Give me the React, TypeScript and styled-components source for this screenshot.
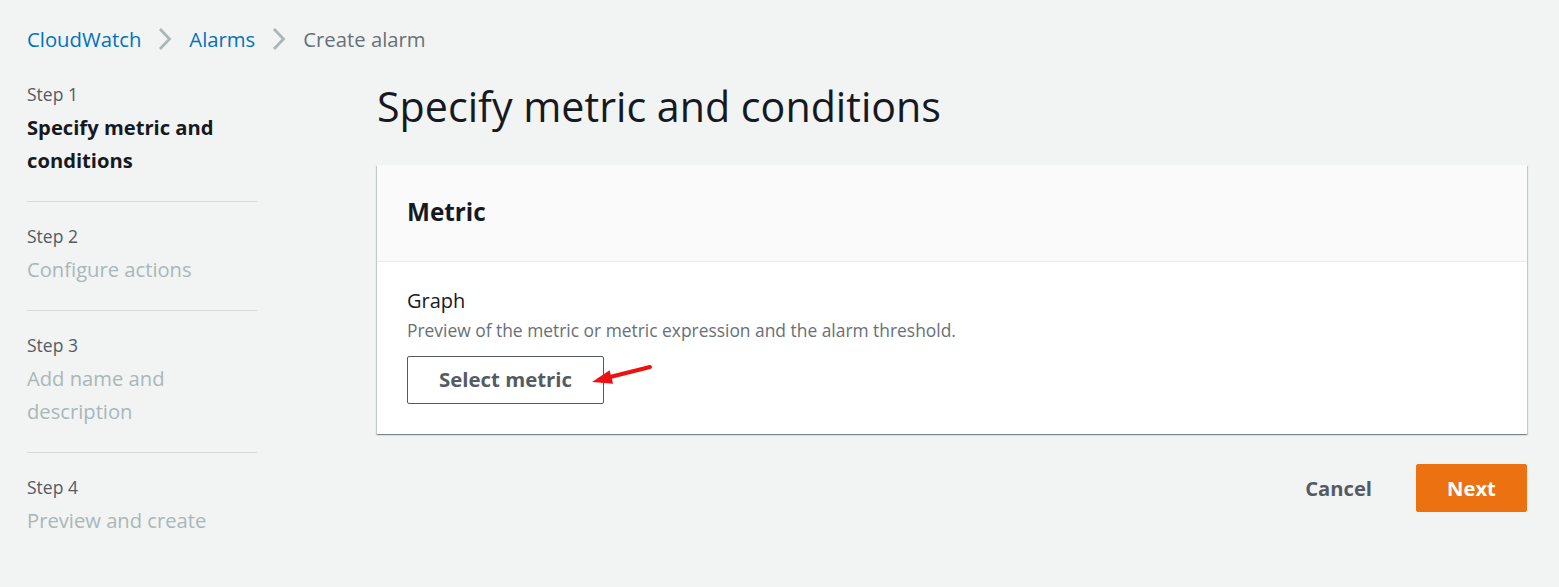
import React from "react";
import styled, { createGlobalStyle } from "styled-components";

const Global = createGlobalStyle`
  html, body { margin: 0; padding: 0; background: #f2f3f3; }
  body { font-family: "Open Sans", "Noto Sans", sans-serif; color: #16191f; }
  * { box-sizing: border-box; }
`;

const Page = styled.div`
  padding: 24px 32px 20px 27px;
`;

const Breadcrumbs = styled.nav`
  display: flex;
  align-items: center;
  gap: 17px;
  height: 30px;
  font-size: 20.3px;
`;

const Crumb = styled.a<{ $current?: boolean }>`
  color: ${(p) => (p.$current ? "#687078" : "#0073bb")};
  text-decoration: none;
`;

const Chevron = styled.svg`
  width: 14px;
  height: 24px;
  flex: none;
`;

const Layout = styled.div`
  display: flex;
  gap: 120px;
  margin-top: 27px;
`;

const Sidebar = styled.ol`
  list-style: none;
  margin: 0;
  padding: 0;
  width: 230px;
  flex: none;
`;

const StepItem = styled.li<{ $last?: boolean }>`
  padding: 0 0 24px;
  margin-bottom: 21px;
  border-bottom: ${(p) => (p.$last ? "none" : "1px solid #d5dbdb")};
`;

const StepLabel = styled.div`
  font-size: 17.5px;
  line-height: 26px;
  color: #545b64;
`;

const StepTitle = styled.div<{ $active?: boolean }>`
  font-size: 20.2px;
  line-height: 33px;
  margin-top: 4px;
  font-weight: ${(p) => (p.$active ? 700 : 400)};
  color: ${(p) => (p.$active ? "#16191f" : "#aab7b8")};
`;

const Main = styled.main`
  flex: 1;
  min-width: 0;
`;

const Title = styled.h1`
  margin: 0;
  margin-top: -3px;
  font-size: 41.2px;
  font-weight: 400;
  line-height: 56px;
`;

const Card = styled.section`
  margin-top: 31px;
  background: #fff;
  box-shadow: 0 1px 1px 0 rgba(0, 28, 36, 0.3), 1px 1px 1px 0 rgba(0, 28, 36, 0.15),
    -1px 1px 1px 0 rgba(0, 28, 36, 0.15);
`;

const CardHeader = styled.header`
  height: 97px;
  display: flex;
  align-items: center;
  padding: 0 30px 3px;
  background: #fafafa;
  border-bottom: 1px solid #eaeded;
`;

const CardTitle = styled.h2`
  margin: 0;
  font-size: 24.3px;
  font-weight: 700;
`;

const CardBody = styled.div`
  padding: 24px 30px 30px;
`;

const FieldLabel = styled.div`
  font-size: 20px;
  line-height: 30px;
  color: #16191f;
`;

const FieldDesc = styled.div`
  font-size: 17.4px;
  line-height: 28px;
  color: #687078;
`;

const ButtonRow = styled.div`
  position: relative;
  display: inline-flex;
  margin-top: 12px;
`;

const OutlineButton = styled.button`
  width: 197px;
  height: 48px;
  padding: 0 0 2px;
  border: 1px solid #545b64;
  border-radius: 2px;
  background: #fff;
  font-family: inherit;
  font-size: 20.4px;
  font-weight: 700;
  color: #545b64;
  cursor: pointer;
`;

const Arrow = styled.svg`
  position: absolute;
  left: 180px;
  top: 5px;
  width: 70px;
  height: 28px;
  pointer-events: none;
`;

const Actions = styled.div`
  display: flex;
  justify-content: flex-end;
  align-items: center;
  gap: 44px;
  margin-top: 30px;
`;

const TextButton = styled.button`
  background: none;
  border: none;
  font-family: inherit;
  font-size: 20.2px;
  font-weight: 700;
  color: #545b64;
  padding: 0;
  cursor: pointer;
`;

const PrimaryButton = styled.button`
  width: 111px;
  height: 48px;
  background: #ec7211;
  border: 1px solid #ec7211;
  border-radius: 2px;
  color: #fff;
  font-family: inherit;
  font-size: 20.2px;
  font-weight: 700;
  cursor: pointer;
`;

const ChevronIcon = () => (
  <Chevron viewBox="0 0 14 24">
    <path d="M2 2 L11.5 12 L2 22" fill="none" stroke="#aab7b8" strokeWidth="2.8" />
  </Chevron>
);

const steps = [
  { label: "Step 1", title: "Specify metric and conditions", active: true },
  { label: "Step 2", title: "Configure actions" },
  { label: "Step 3", title: "Add name and description" },
  { label: "Step 4", title: "Preview and create" },
];

export default function App() {
  return (
    <>
      <Global />
      <Page>
        <Breadcrumbs>
          <Crumb href="#">CloudWatch</Crumb>
          <ChevronIcon />
          <Crumb href="#">Alarms</Crumb>
          <ChevronIcon />
          <Crumb $current>Create alarm</Crumb>
        </Breadcrumbs>
        <Layout>
          <Sidebar>
            {steps.map((s, i) => (
              <StepItem key={s.label} $last={i === steps.length - 1}>
                <StepLabel>{s.label}</StepLabel>
                <StepTitle $active={s.active}>{s.title}</StepTitle>
              </StepItem>
            ))}
          </Sidebar>
          <Main>
            <Title>Specify metric and conditions</Title>
            <Card>
              <CardHeader>
                <CardTitle>Metric</CardTitle>
              </CardHeader>
              <CardBody>
                <FieldLabel>Graph</FieldLabel>
                <FieldDesc>Preview of the metric or metric expression and the alarm threshold.</FieldDesc>
                <ButtonRow>
                  <OutlineButton>Select metric</OutlineButton>
                  <Arrow viewBox="0 0 70 28">
                    <path d="M23 16 L63 6" stroke="#ee1111" strokeWidth="4" strokeLinecap="round" />
                    <path d="M5 21 L22.6 9.2 L26.1 22.8 Z" fill="#ee1111" />
                  </Arrow>
                </ButtonRow>
              </CardBody>
            </Card>
            <Actions>
              <TextButton>Cancel</TextButton>
              <PrimaryButton>Next</PrimaryButton>
            </Actions>
          </Main>
        </Layout>
      </Page>
    </>
  );
}
